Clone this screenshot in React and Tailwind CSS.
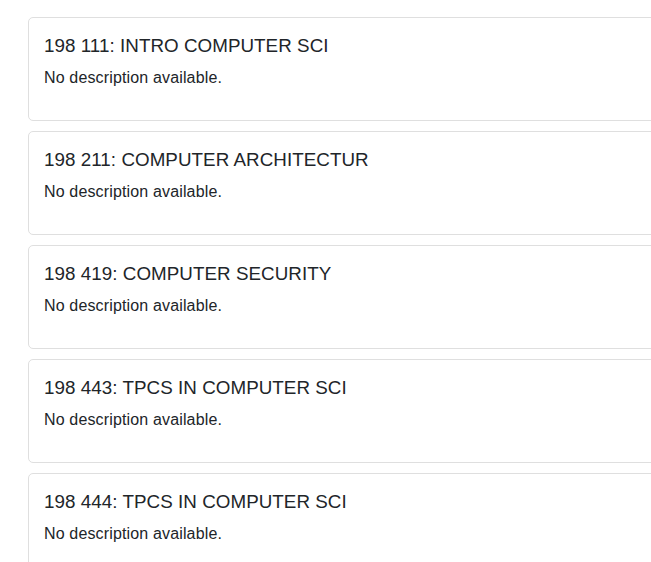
const COURSES = [
  { code: '198 111', title: 'INTRO COMPUTER SCI' },
  { code: '198 211', title: 'COMPUTER ARCHITECTUR' },
  { code: '198 419', title: 'COMPUTER SECURITY' },
  { code: '198 443', title: 'TPCS IN COMPUTER SCI' },
  { code: '198 444', title: 'TPCS IN COMPUTER SCI' },
]

const CourseCard = ({ code, title }) => (
  <div className="mb-[10px] w-[680px] shrink-0 rounded-[5px] border border-[#dfdfdf] bg-white pt-[17px] pr-4 pb-[14px] pl-[15px]">
    <h5 className="mb-[9px] text-[18.8px] leading-[22px] font-normal tracking-[0.05px] text-[#212529]">
      {code}: {title}
    </h5>
    <p className="mb-4 text-base leading-6 tracking-[0.15px] text-[#212529]">No description available.</p>
  </div>
)

export default function App() {
  return (
    <div
      className="h-[562px] w-[651px] overflow-hidden bg-white"
      style={{ fontFamily: '"Liberation Sans", Arial, sans-serif' }}
    >
      <div className="flex flex-col pt-[17px] pl-[28px]">
        {COURSES.map((course) => (
          <CourseCard key={course.code + course.title} code={course.code} title={course.title} />
        ))}
      </div>
    </div>
  )
}
